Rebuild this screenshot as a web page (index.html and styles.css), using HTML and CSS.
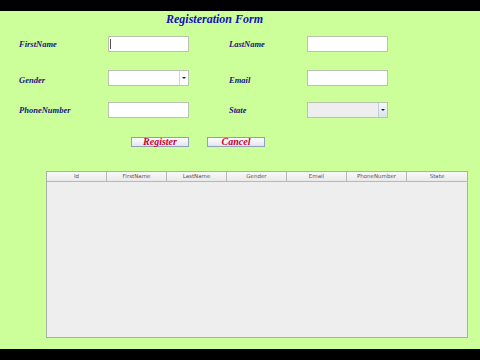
FILE: index.html
```html
<!DOCTYPE html>
<html lang="en">
<head>
<meta charset="UTF-8">
<title>Registeration Form</title>
<link rel="stylesheet" href="styles.css">
</head>
<body>
<div class="screen">
    <div class="panel">
        <h1 class="title">Registeration Form</h1>

        <div class="form">
            <label class="label">FirstName</label>
            <div class="field"><span class="caret"></span></div>
            <span></span>
            <label class="label">LastName</label>
            <div class="field"></div>

            <label class="label low">Gender</label>
            <div class="combo">
                <div class="combo-text"></div>
                <div class="combo-btn"><span class="arrow"></span></div>
            </div>
            <span></span>
            <label class="label low">Email</label>
            <div class="field"></div>

            <label class="label">PhoneNumber</label>
            <div class="field"></div>
            <span></span>
            <label class="label">State</label>
            <div class="combo disabled">
                <div class="combo-text"></div>
                <div class="combo-btn"><span class="arrow"></span></div>
            </div>
        </div>

        <div class="actions">
            <button class="btn">Register</button>
            <button class="btn">Cancel</button>
        </div>

        <div class="table">
            <div class="thead">
                <div class="th">Id</div>
                <div class="th">FirstName</div>
                <div class="th">LastName</div>
                <div class="th">Gender</div>
                <div class="th">Email</div>
                <div class="th">PhoneNumber</div>
                <div class="th">State</div>
            </div>
        </div>
    </div>
</div>
</body>
</html>
```

FILE: styles.css
```css
* {
    box-sizing: border-box;
    margin: 0;
    padding: 0;
}

body {
    background: #000;
    font-family: 'Liberation Serif', serif;
}

.screen {
    height: 360px;
    padding-top: 11px;
}

.panel {
    height: 338px;
    background: #ccff99;
    overflow: hidden;
}

.title {
    padding-left: 166px;
    padding-top: 1px;
    font-size: 12px;
    line-height: 14px;
    font-weight: bold;
    font-style: italic;
    color: #1111bb;
}

.form {
    display: grid;
    grid-template-columns: 89px 81px 40px 78px 81px;
    grid-template-rows: 34px 32px 16px;
    align-items: start;
    padding-left: 19px;
    margin-top: 10px;
}

.label {
    height: 16px;
    line-height: 16px;
    font-size: 8.5px;
    font-weight: bold;
    font-style: italic;
    color: #16167f;
}

.label.low {
    padding-top: 2px;
}

.field {
    position: relative;
    height: 16px;
    background: #fff;
    border: 1px solid #b8c4b0;
}

.caret {
    position: absolute;
    left: 1px;
    top: 2px;
    width: 1px;
    height: 10px;
    background: #555;
}

.combo {
    display: flex;
    height: 16px;
    background: #fff;
    border: 1px solid #b8c4b0;
}

.combo-text {
    flex: 1;
}

.combo-btn {
    width: 9px;
    display: flex;
    align-items: center;
    justify-content: center;
    border-left: 1px solid #d0d8d0;
    background: #fff;
}

.combo.disabled {
    background: #eeeeee;
}

.combo.disabled .combo-btn {
    background: linear-gradient(#f4f8fc, #d8e4ee);
    border-left-color: #c0ccd6;
}

.arrow {
    width: 0;
    height: 0;
    border-left: 2px solid transparent;
    border-right: 2px solid transparent;
    border-top: 2px solid #222;
}

.actions {
    display: flex;
    gap: 18px;
    padding-left: 131px;
    margin-top: 19px;
}

.btn {
    width: 58px;
    height: 10px;
    font-family: 'Liberation Serif', serif;
    font-size: 10px;
    line-height: 8px;
    font-weight: bold;
    font-style: italic;
    color: #cc0033;
    background: linear-gradient(#ffffff, #dfe6ef);
    border: 1px solid #8fa0b8;
}

.table {
    margin-top: 24px;
    margin-left: 46px;
    width: 422px;
    height: 167px;
    background: #eeeeee;
    border: 1px solid #aab0a8;
}

.thead {
    display: grid;
    grid-template-columns: repeat(7, 1fr);
    height: 10px;
    background: linear-gradient(#f8f8f8, #eaeaea);
    border-bottom: 1px solid #b8b8b8;
}

.th {
    font-family: 'DejaVu Sans', sans-serif;
    font-size: 5.5px;
    line-height: 9px;
    text-align: center;
    color: #555;
    border-right: 1px solid #b8b8b8;
}

.th:last-child {
    border-right: none;
}
```
